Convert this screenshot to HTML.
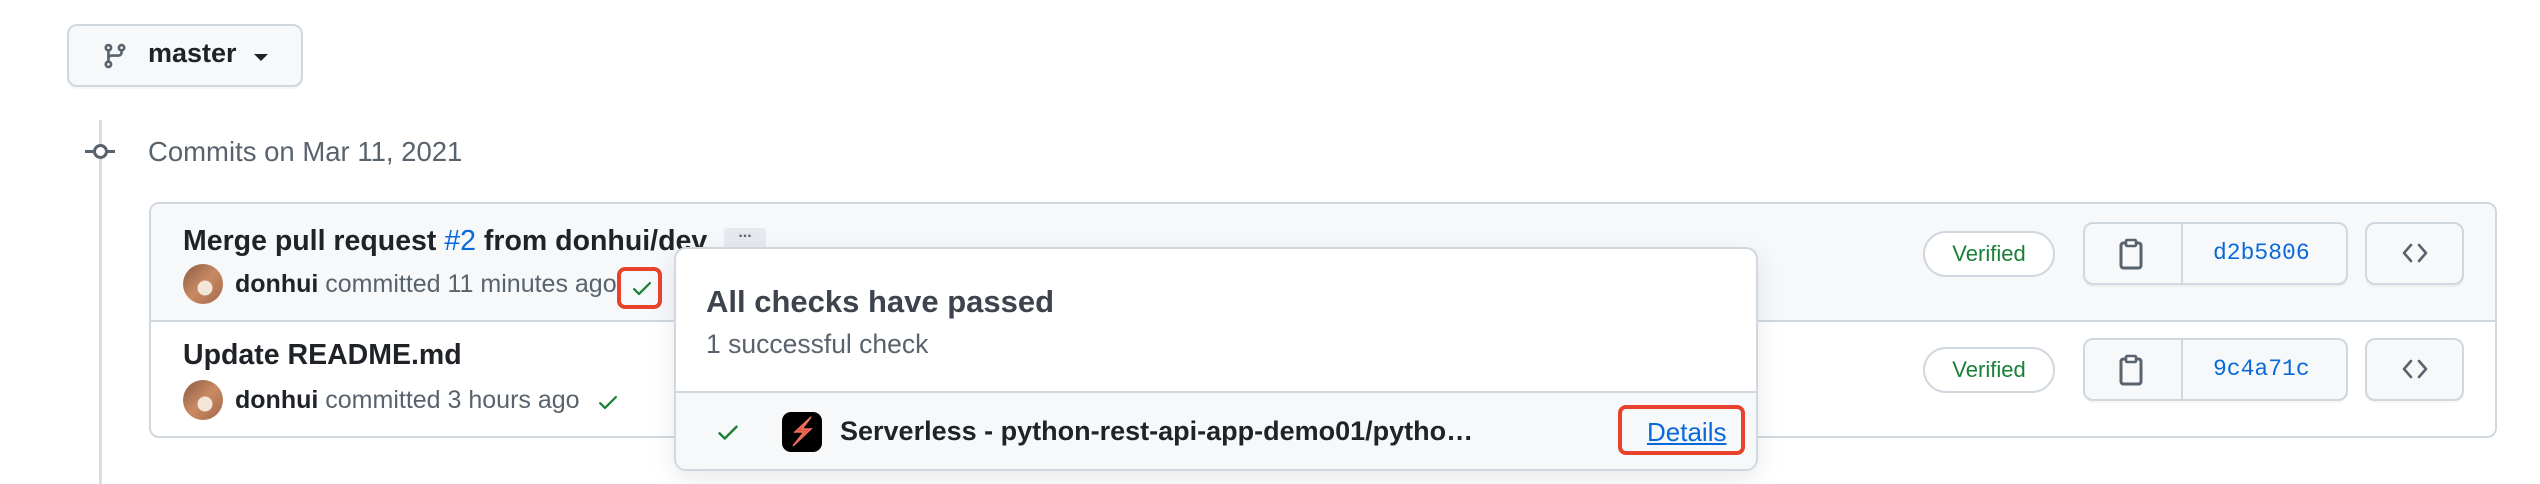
<!DOCTYPE html>
<html><head><meta charset="utf-8"><style>
*{box-sizing:border-box;margin:0;padding:0}
body{width:2540px;height:484px;background:#fff;font-family:"Liberation Sans",sans-serif;position:relative;overflow:hidden;color:#1f2328}
.a{position:absolute}
.btn{position:absolute;background:#f6f8fa;border:2px solid #d0d7de;border-radius:10px;box-shadow:0 2px 0 rgba(31,35,40,0.04)}
.av{position:absolute;width:40px;height:40px;border-radius:50%;background:radial-gradient(circle at 55% 60%,#f3e6d8 0 22%,transparent 24%),linear-gradient(135deg,#8a5a44,#c98a63 50%,#a4664a)}
.meta{position:absolute;font-size:25px;color:#59636e;white-space:nowrap}
.meta b{color:#1f2328}
.ver{position:absolute;border:2px solid #d0d7de;border-radius:24px;background:#fff;color:#1a7f37;font-size:22px;text-align:center}
.sha{position:absolute;font-family:"Liberation Mono",monospace;font-size:23px;color:#0969da}
</style></head><body>
<div class="btn" style="left:67px;top:24px;width:236px;height:63px"></div>
<svg class="a" style="left:101px;top:40px" width="28" height="32" viewBox="0 0 16 16"><path fill="#59636e" d="M9.5 3.25a2.25 2.25 0 1 1 3 2.122V6A2.5 2.5 0 0 1 10 8.5H6a1 1 0 0 0-1 1v1.128a2.251 2.251 0 1 1-1.5 0V5.372a2.25 2.25 0 1 1 1.5 0v1.836A2.493 2.493 0 0 1 6 7h4a1 1 0 0 0 1-1v-.628A2.25 2.25 0 0 1 9.5 3.25Zm-6 0a.75.75 0 1 0 1.5 0 .75.75 0 0 0-1.5 0Zm8.25-.75a.75.75 0 1 0 0 1.5.75.75 0 0 0 0-1.5ZM4.25 12a.75.75 0 1 0 0 1.5.75.75 0 0 0 0-1.5Z"/></svg>
<div class="a" style="left:148px;top:38px;font-size:27px;font-weight:bold;color:#1f2328">master</div>
<div class="a" style="left:254px;top:54px;width:0;height:0;border-left:7px solid transparent;border-right:7px solid transparent;border-top:7px solid #1f2328"></div>

<div class="a" style="left:99px;top:120px;width:3px;height:364px;background:#d8dee4"></div>
<div class="a" style="left:86px;top:148px;width:29px;height:7px;background:#fff"></div>
<div class="a" style="left:85px;top:150px;width:30px;height:3px;background:#59636e"></div>
<div class="a" style="left:93px;top:144px;width:15px;height:15px;border:3px solid #59636e;border-radius:50%;background:#fff"></div>
<div class="a" style="left:148px;top:136px;font-size:27.5px;color:#59636e">Commits on Mar 11, 2021</div>

<div class="a" style="left:149px;top:202px;width:2348px;height:236px;border:2px solid #d0d7de;border-radius:10px;overflow:hidden;background:#fff">
<div style="height:118px;background:#f6f8fa;border-bottom:2px solid #d0d7de"></div>
</div>
<div class="a" style="left:183px;top:225px;font-size:28.5px;font-weight:bold;white-space:nowrap">Merge pull request <span style="color:#0969da;font-weight:normal">#2</span> from donhui/dev</div>
<div class="a" style="left:724px;top:228px;width:42px;height:22px;background:#e6eaef;border-radius:3px;color:#59636e;font-size:16px;text-align:center;line-height:10px;font-weight:bold">...</div>
<div class="av" style="left:183px;top:264px"></div>
<div class="meta" style="left:235px;top:270px"><b>donhui</b> committed 11 minutes ago</div>
<svg class="a" style="left:630px;top:276px" width="24" height="24" viewBox="0 0 16 16"><path fill="#1a7f37" d="M13.78 4.22a.75.75 0 0 1 0 1.06l-7.25 7.25a.75.75 0 0 1-1.06 0L2.22 9.28a.75.75 0 0 1 1.06-1.06L6 10.94l6.72-6.72a.75.75 0 0 1 1.06 0Z"/></svg>
<div class="a" style="left:617px;top:267px;width:45px;height:42px;border:4px solid #e8412c;border-radius:8px"></div>

<div class="a" style="left:183px;top:339px;font-size:28.5px;font-weight:bold">Update README.md</div>
<div class="av" style="left:183px;top:380px"></div>
<div class="meta" style="left:235px;top:386px"><b>donhui</b> committed 3 hours ago</div>
<svg class="a" style="left:596px;top:390px" width="24" height="24" viewBox="0 0 16 16"><path fill="#1a7f37" d="M13.78 4.22a.75.75 0 0 1 0 1.06l-7.25 7.25a.75.75 0 0 1-1.06 0L2.22 9.28a.75.75 0 0 1 1.06-1.06L6 10.94l6.72-6.72a.75.75 0 0 1 1.06 0Z"/></svg>

<!-- right side -->
<div class="ver" style="left:1923px;top:231px;width:132px;height:46px;line-height:42px">Verified</div>
<div class="btn" style="left:2083px;top:222px;width:265px;height:63px"></div>
<div class="a" style="left:2181px;top:224px;width:2px;height:59px;background:#d0d7de"></div>
<svg class="a" style="left:2119px;top:238px" width="24" height="32" viewBox="0 0 12 16"><rect x="1" y="2.5" width="10" height="12.5" rx="1.2" fill="none" stroke="#59636e" stroke-width="1.5"/><rect x="3.5" y="1" width="5" height="3" rx=".6" fill="#fff" stroke="#59636e" stroke-width="1.3"/></svg>
<div class="sha" style="left:2213px;top:240px">d2b5806</div>
<div class="btn" style="left:2365px;top:222px;width:99px;height:63px"></div>
<svg class="a" style="left:2400px;top:240px" width="30" height="26" viewBox="0 0 30 26"><path d="M11 5 L4 13 L11 21 M19 5 L26 13 L19 21" fill="none" stroke="#59636e" stroke-width="2.6" stroke-linecap="round" stroke-linejoin="round"/></svg>

<div class="ver" style="left:1923px;top:347px;width:132px;height:46px;line-height:42px">Verified</div>
<div class="btn" style="left:2083px;top:338px;width:265px;height:63px"></div>
<div class="a" style="left:2181px;top:340px;width:2px;height:59px;background:#d0d7de"></div>
<svg class="a" style="left:2119px;top:354px" width="24" height="32" viewBox="0 0 12 16"><rect x="1" y="2.5" width="10" height="12.5" rx="1.2" fill="none" stroke="#59636e" stroke-width="1.5"/><rect x="3.5" y="1" width="5" height="3" rx=".6" fill="#fff" stroke="#59636e" stroke-width="1.3"/></svg>
<div class="sha" style="left:2213px;top:356px">9c4a71c</div>
<div class="btn" style="left:2365px;top:338px;width:99px;height:63px"></div>
<svg class="a" style="left:2400px;top:356px" width="30" height="26" viewBox="0 0 30 26"><path d="M11 5 L4 13 L11 21 M19 5 L26 13 L19 21" fill="none" stroke="#59636e" stroke-width="2.6" stroke-linecap="round" stroke-linejoin="round"/></svg>

<!-- popup -->
<div class="a" style="left:674px;top:247px;width:1084px;height:224px;background:#fff;border:2px solid #d0d7de;border-radius:12px;box-shadow:0 8px 24px rgba(140,149,159,0.2);overflow:hidden">
<div style="position:absolute;left:0;top:142px;width:100%;height:82px;background:#f6f8fa;border-top:2px solid #d0d7de"></div>
</div>
<div class="a" style="left:706px;top:284px;font-size:31px;font-weight:bold;color:#3d444d">All checks have passed</div>
<div class="a" style="left:706px;top:329px;font-size:26.5px;color:#59636e">1 successful check</div>
<svg class="a" style="left:715px;top:419px" width="26" height="26" viewBox="0 0 16 16"><path fill="#1a7f37" d="M13.78 4.22a.75.75 0 0 1 0 1.06l-7.25 7.25a.75.75 0 0 1-1.06 0L2.22 9.28a.75.75 0 0 1 1.06-1.06L6 10.94l6.72-6.72a.75.75 0 0 1 1.06 0Z"/></svg>
<svg class="a" style="left:782px;top:412px" width="40" height="40" viewBox="0 0 40 40"><rect width="40" height="40" rx="9" fill="#000"/><path d="M29 5 L13 20 L22 20 L11 34 L29 17 L20 17 Z" fill="#e8503f" stroke="#f07060" stroke-width="1.5"/></svg>
<div class="a" style="left:840px;top:416px;font-size:27px;font-weight:bold;white-space:nowrap;color:#1f2328">Serverless - python-rest-api-app-demo01/pytho…</div>
<div class="a" style="left:1647px;top:417px;font-size:26px;color:#0969da;text-decoration:underline">Details</div>
<div class="a" style="left:1618px;top:405px;width:127px;height:50px;border:4px solid #e8412c;border-radius:8px"></div>
</body></html>
